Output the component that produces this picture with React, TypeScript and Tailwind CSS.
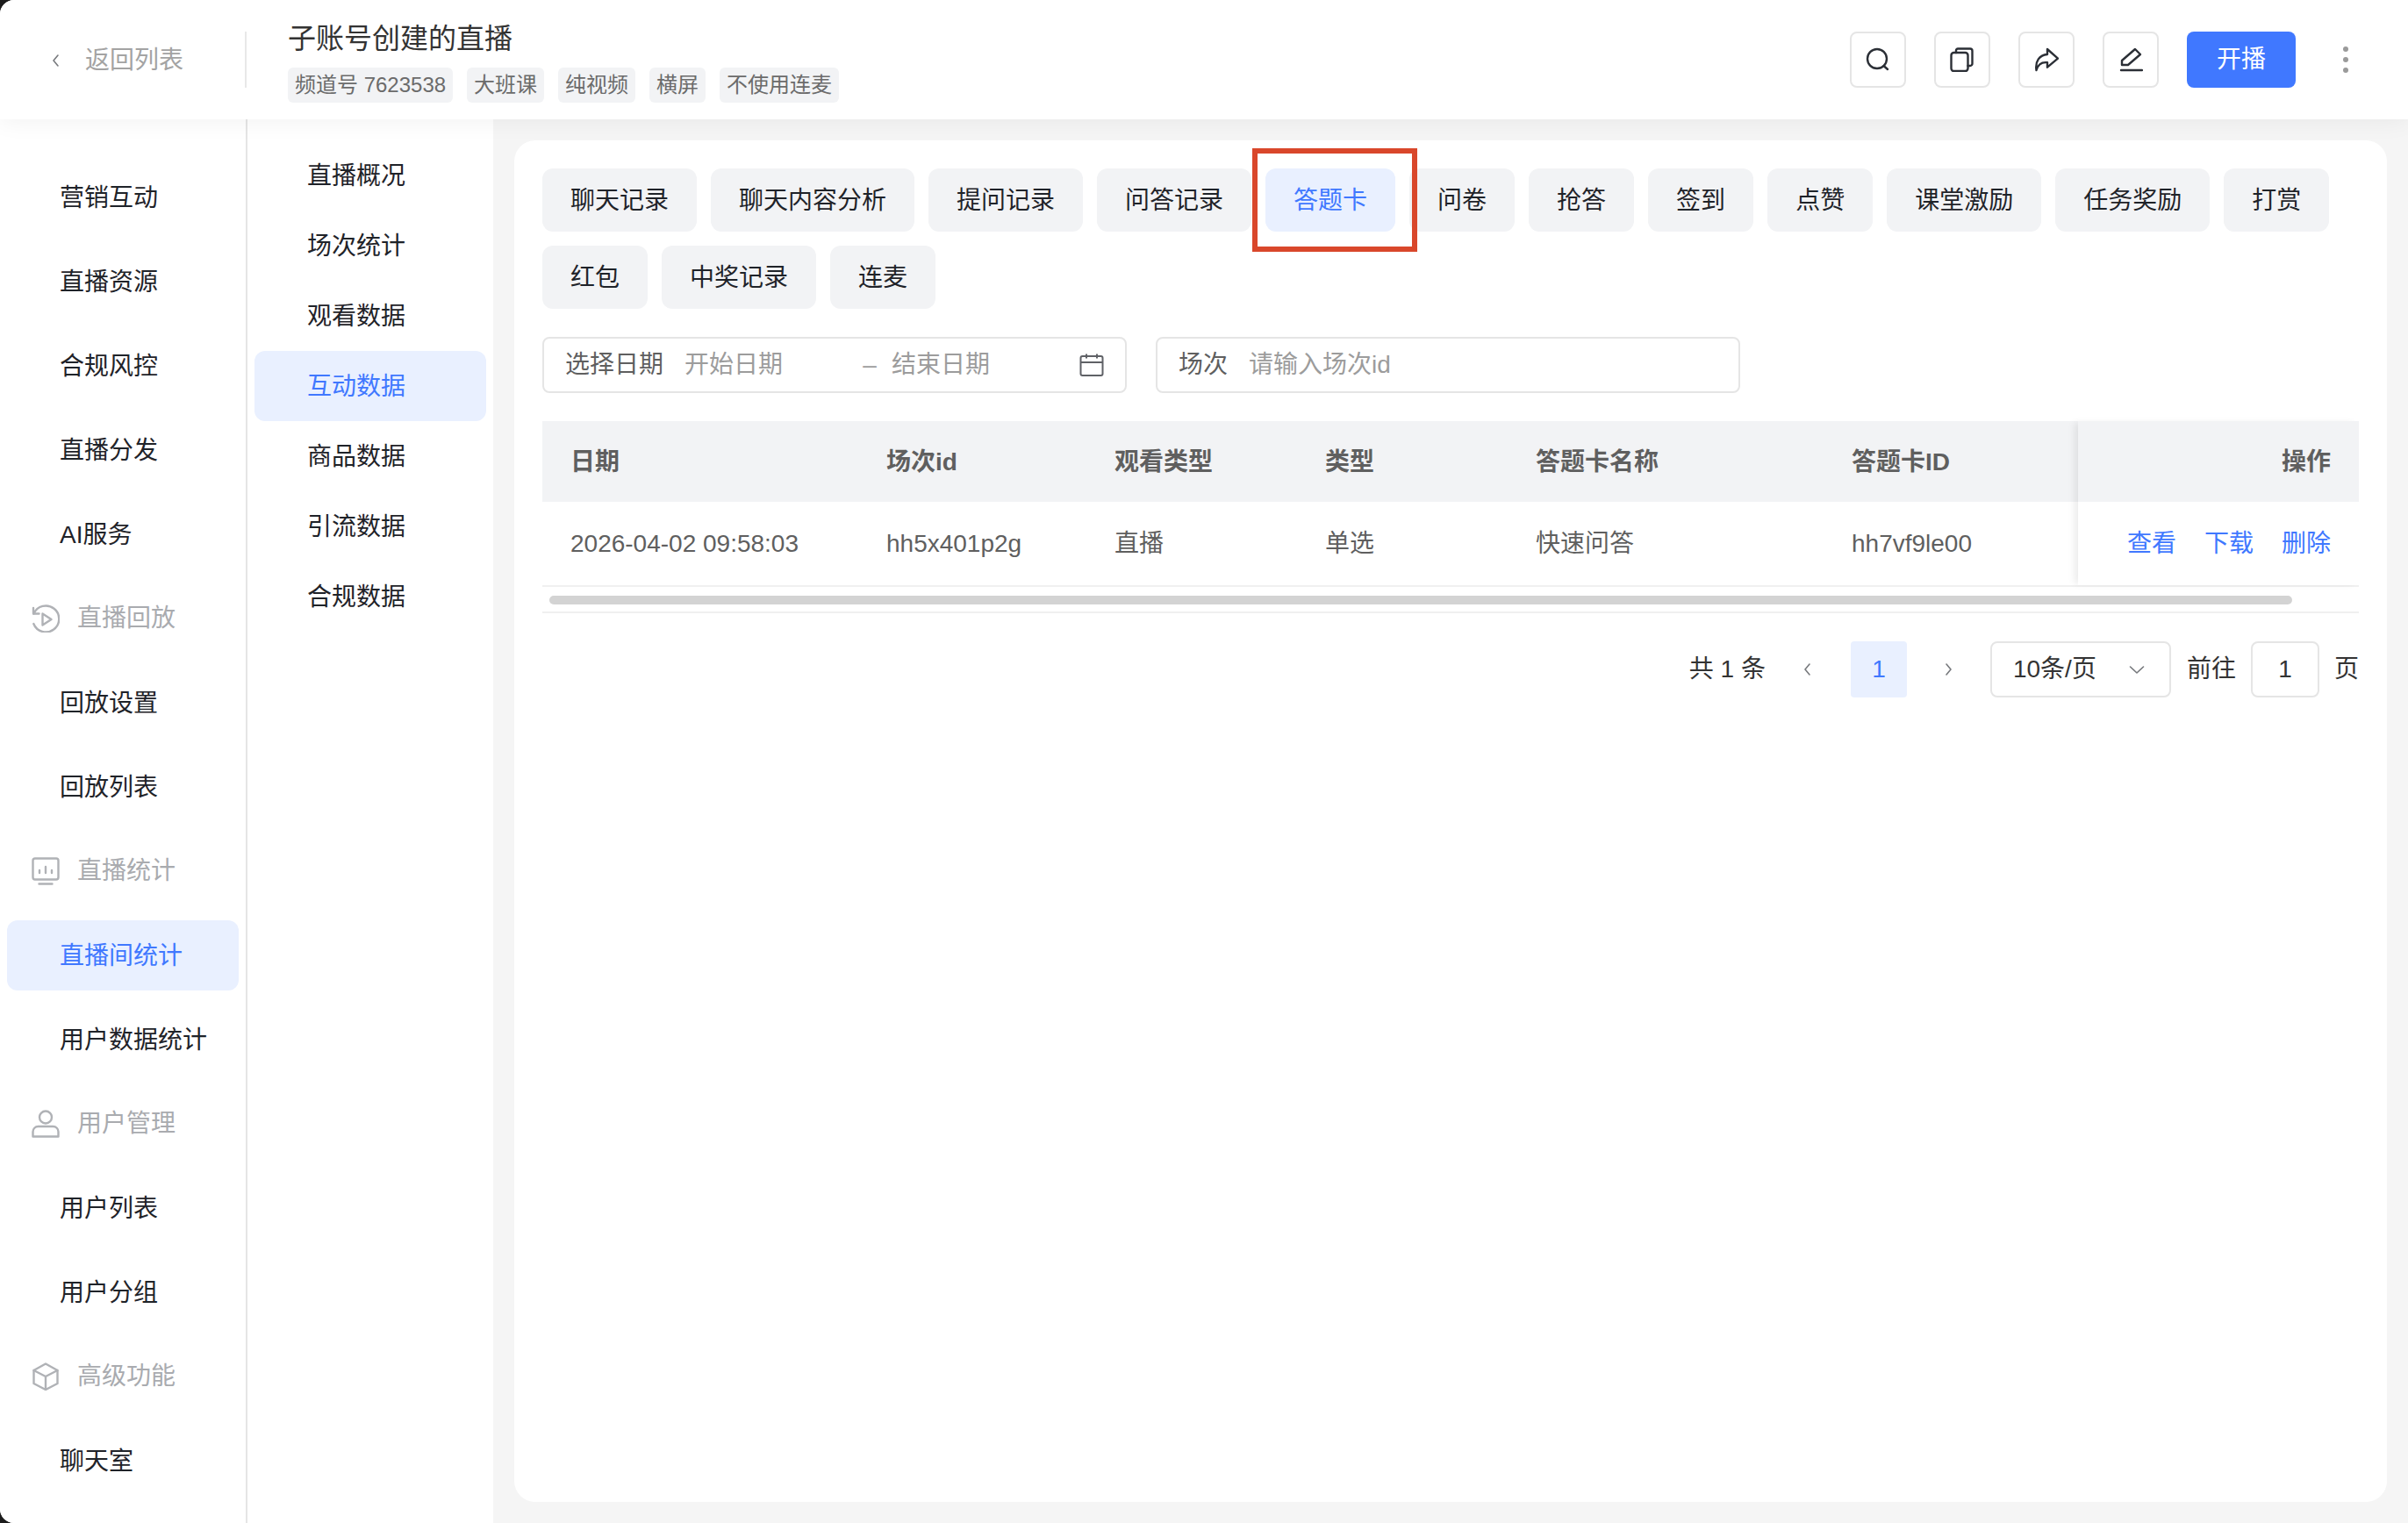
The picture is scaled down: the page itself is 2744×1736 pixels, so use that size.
const FONT = "font-['Liberation_Sans','Noto_Sans_CJK_SC',sans-serif]";

const topTags = ["频道号 7623538", "大班课", "纯视频", "横屏", "不使用连麦"];

const mainNav = [
  { label: "营销互动" },
  { label: "直播资源" },
  { label: "合规风控" },
  { label: "直播分发" },
  { label: "AI服务" },
  { label: "直播回放", group: "replay" },
  { label: "回放设置" },
  { label: "回放列表" },
  { label: "直播统计", group: "stats" },
  { label: "直播间统计", active: true },
  { label: "用户数据统计" },
  { label: "用户管理", group: "user" },
  { label: "用户列表" },
  { label: "用户分组" },
  { label: "高级功能", group: "box" },
  { label: "聊天室" },
];

const subNav = ["直播概况", "场次统计", "观看数据", "互动数据", "商品数据", "引流数据", "合规数据"];

const tabs = [
  "聊天记录", "聊天内容分析", "提问记录", "问答记录", "答题卡", "问卷", "抢答", "签到", "点赞",
  "课堂激励", "任务奖励", "打赏", "红包", "中奖记录", "连麦",
];

const columns = [
  { title: "日期", value: "2026-04-02 09:58:03", width: "w-[360px]" },
  { title: "场次id", value: "hh5x401p2g", width: "w-[260px]" },
  { title: "观看类型", value: "直播", width: "w-[240px]" },
  { title: "类型", value: "单选", width: "w-[240px]" },
  { title: "答题卡名称", value: "快速问答", width: "w-[360px]" },
  { title: "答题卡ID", value: "hh7vf9le00", width: "w-[290px]" },
];

function GroupIcon({ kind }: { kind?: string }) {
  const common = {
    width: 32,
    height: 32,
    viewBox: "0 0 32 32",
    fill: "none",
    stroke: "#b0b2b6",
    strokeWidth: 2.4,
    strokeLinecap: "round" as const,
    strokeLinejoin: "round" as const,
  };
  if (kind === "replay") {
    return (
      <svg {...common}>
        <path d="M2 4v6.500h6.500" />
        <path d="M2.500 10.500A15 15 0 1 1 2.300 22" />
        <path d="M12.500 10.500l10 6.500-10 6.500z" />
      </svg>
    );
  }
  if (kind === "stats") {
    return (
      <svg {...common}>
        <rect x="1.500" y="1.500" width="29" height="24" rx="2.500" />
        <path d="M8.500 30.500h15M9 15v3M16 11v7M23 15v3" />
      </svg>
    );
  }
  if (kind === "user") {
    return (
      <svg {...common}>
        <circle cx="16" cy="8.500" r="7" />
        <path d="M1.500 30.500V25a6 6 0 0 1 6-6h17a6 6 0 0 1 6 6v5.500z" />
      </svg>
    );
  }
  return (
    <svg {...common}>
      <path d="M16 1.500l13.500 7.500v15L16 31 2.500 24V9z" />
      <path d="M2.500 9L16 16l13.500-7M16 16v15" />
    </svg>
  );
}

function ToolButton({ children }: { children: React.ReactNode }) {
  return (
    <button className="flex h-16 w-16 items-center justify-center rounded-lg border-2 border-[#e5e5e5] bg-white">
      <svg width="28" height="28" viewBox="0 0 28 28" fill="none" stroke="#2b2f36" strokeWidth="2.400" strokeLinecap="round" strokeLinejoin="round">
        {children}
      </svg>
    </button>
  );
}

function Chevron({ dir }: { dir: "left" | "right" | "down" }) {
  const d = dir === "left" ? "M8 2L3 8l5 6" : dir === "right" ? "M3 2l5 6-5 6" : "M1.500 5L9 12l7.500-7";
  return (
    <svg width={dir === "down" ? 18 : 11} height="16" viewBox={dir === "down" ? "0 0 18 16" : "0 0 11 16"} fill="none" stroke="#77797d" strokeWidth="1.600" strokeLinecap="round" strokeLinejoin="round">
      <path d={d} />
    </svg>
  );
}

export default function App() {
  return (
    <div className="h-[1736px] w-[2744px] bg-[#1c1c1c]">
      <div className={`${FONT} flex h-full w-full flex-col overflow-hidden rounded-l-2xl bg-[#f5f5f5] text-[28px] text-[#1f2329]`}>
        <header className="relative z-10 flex h-[136px] shrink-0 items-center bg-white pr-[68px] shadow-[0_4px_24px_rgba(0,0,0,0.05)]">
          <div className="flex w-[279px] items-center gap-[28px] pl-[58px] pt-[2px] text-[#a3a3a3]">
            <Chevron dir="left" />
            <span>返回列表</span>
          </div>
          <div className="h-[64px] w-[2px] bg-[#e8e8e8]" />
          <div className="ml-[47px] flex flex-col gap-[13px] pt-[4px]">
            <div className="text-[32px] leading-[40px] text-[#333]">子账号创建的直播</div>
            <div className="flex gap-4">
              {topTags.map((t) => (
                <span key={t} className="flex h-10 items-center rounded-md bg-[#f2f3f5] px-2 text-[24px] text-[#6b6b6b]">
                  {t}
                </span>
              ))}
            </div>
          </div>
          <div className="ml-auto flex items-center gap-8">
            <ToolButton>
              <circle cx="13" cy="13" r="11" />
              <path d="M20.500 21l4.500 4" />
            </ToolButton>
            <ToolButton>
              <rect x="1.500" y="6" width="19" height="21" rx="3" />
              <path d="M7 6V3.500a2 2 0 0 1 2-2h14a2.500 2.500 0 0 1 2.500 2.500V18.500a2.500 2.500 0 0 1-2.500 2.500h-2.500" />
            </ToolButton>
            <ToolButton>
              <path d="M15 2l12 10.700-12 10v-5.500C9 16.500 4.500 19 2.500 26 1 16 6 8.500 15 8z" />
            </ToolButton>
            <ToolButton>
              <path d="M19 2l6 6-14 12H4v-5z" />
              <path d="M3 26h24" />
            </ToolButton>
            <button className="flex h-16 w-[124px] items-center justify-center rounded-lg bg-[#4078ff] text-white">开播</button>
            <div className="ml-[22px] flex w-[6px] flex-col gap-[6px]">
              <span className="h-[6px] w-[6px] rounded-full bg-[#9a9a9a]" />
              <span className="h-[6px] w-[6px] rounded-full bg-[#9a9a9a]" />
              <span className="h-[6px] w-[6px] rounded-full bg-[#9a9a9a]" />
            </div>
          </div>
        </header>

        <div className="flex min-h-0 flex-1">
          <nav className="flex w-[282px] shrink-0 flex-col border-r-2 border-[#e5e5e5] bg-white px-2 pt-[41px]">
            {mainNav.map((item) =>
              item.group ? (
                <div key={item.label} className="flex h-[96px] shrink-0 items-center gap-[20px] pl-7 text-[#a9abaf]">
                  <GroupIcon kind={item.group} />
                  <span>{item.label}</span>
                </div>
              ) : (
                <div key={item.label} className="flex h-[96px] shrink-0 items-center">
                  <div className={`flex h-20 w-[264px] items-center rounded-xl pl-[60px] pt-[2px] ${item.active ? "bg-[#e9f0ff] text-[#4078ff]" : ""}`}>
                    {item.label}
                  </div>
                </div>
              ),
            )}
          </nav>

          <aside className="flex w-[280px] shrink-0 flex-col bg-white pl-2 pr-[8px] pt-6">
            {subNav.map((label) => (
              <div
                key={label}
                className={`flex h-20 items-center rounded-xl pl-[60px] pt-[2px] ${label === "互动数据" ? "bg-[#e9f0ff] text-[#4078ff]" : ""}`}
              >
                {label}
              </div>
            ))}
          </aside>

          <main className="min-w-0 flex-1 pl-6 pr-6 pb-6 pt-6">
            <div className="h-full rounded-3xl bg-white p-8">
              <div className="flex flex-wrap gap-4">
                {tabs.map((t) =>
                  t === "答题卡" ? (
                    <div key={t} className="relative flex h-[72px] items-center rounded-xl bg-[#e9f0ff] px-8 pt-[2px] text-[#4078ff]">
                      {t}
                      <div className="absolute -bottom-[23px] -left-[15px] -right-[25px] -top-[23px] border-[6px] border-[#d9472b]" />
                    </div>
                  ) : (
                    <div key={t} className="flex h-[72px] items-center rounded-xl bg-[#f2f3f5] px-8 pt-[2px]">
                      {t}
                    </div>
                  ),
                )}
              </div>

              <div className="mt-[32px] flex gap-[33px] text-[#9c9c9c]">
                <div className="flex h-16 w-[666px] items-center rounded-lg border-2 border-[#e5e5e5] pl-6 pr-6">
                  <span className="w-[136px] text-[#5f5f5f]">选择日期</span>
                  <span>开始日期</span>
                  <span className="ml-[91px] mr-[17px] w-[16px] text-center">–</span>
                  <span>结束日期</span>
                  <svg className="ml-auto" width="28" height="28" viewBox="0 0 28 28" fill="none" stroke="#5f6166" strokeWidth="2">
                    <rect x="1.500" y="4" width="25" height="22" rx="2" />
                    <path d="M1.500 11h25M8 1.500v5M20 1.500v5" />
                  </svg>
                </div>
                <div className="flex h-16 w-[666px] items-center rounded-lg border-2 border-[#e5e5e5] pl-6">
                  <span className="w-[80px] text-[#5f5f5f]">场次</span>
                  <span>请输入场次id</span>
                </div>
              </div>

              <div className="mt-8 w-[2070px]">
                <div className="flex">
                  <div className="flex">
                    {columns.map((c) => (
                      <div key={c.title} className={c.width}>
                        <div className="flex h-[92px] items-center bg-[#f2f3f5] pl-8 pt-[2px] font-bold text-[#5f5f5f]">{c.title}</div>
                        <div className="flex h-[95px] items-center pl-8 text-[#5f5f5f]">{c.value}</div>
                      </div>
                    ))}
                  </div>
                  <div className="relative z-10 flex-1 shadow-[-6px_0_8px_-2px_rgba(0,0,0,0.08)]">
                    <div className="flex h-[92px] items-center justify-end bg-[#f2f3f5] pr-8 pt-[2px] font-bold text-[#5f5f5f]">操作</div>
                    <div className="flex h-[95px] items-center justify-end gap-8 bg-white pr-8 text-[#4078ff]">
                      <span>查看</span>
                      <span>下载</span>
                      <span>删除</span>
                    </div>
                  </div>
                </div>
                <div className="h-[32px] border-b-2 border-t-2 border-[#f0f0f0] pt-[10px]">
                  <div className="ml-2 h-[10px] w-[1986px] rounded-full bg-[#d3d3d3]" />
                </div>
              </div>

              <div className="mt-8 flex h-16 items-center justify-end text-[#333]">
                <span>共 1 条</span>
                <span className="ml-[42px]"><Chevron dir="left" /></span>
                <span className="ml-[44px] flex h-16 w-16 items-center justify-center rounded bg-[#e9f0ff] text-[#4078ff]">1</span>
                <span className="ml-[42px]"><Chevron dir="right" /></span>
                <div className="ml-[42px] flex h-16 w-[206px] items-center justify-between rounded-lg border-2 border-[#e5e5e5] pl-6 pr-[28px]">
                  <span>10条/页</span>
                  <Chevron dir="down" />
                </div>
                <span className="ml-[18px]">前往</span>
                <div className="ml-[17px] flex h-16 w-[78px] items-center justify-center rounded-lg border-2 border-[#e5e5e5]">1</div>
                <span className="ml-[17px]">页</span>
              </div>
            </div>
          </main>
        </div>
      </div>
    </div>
  );
}
